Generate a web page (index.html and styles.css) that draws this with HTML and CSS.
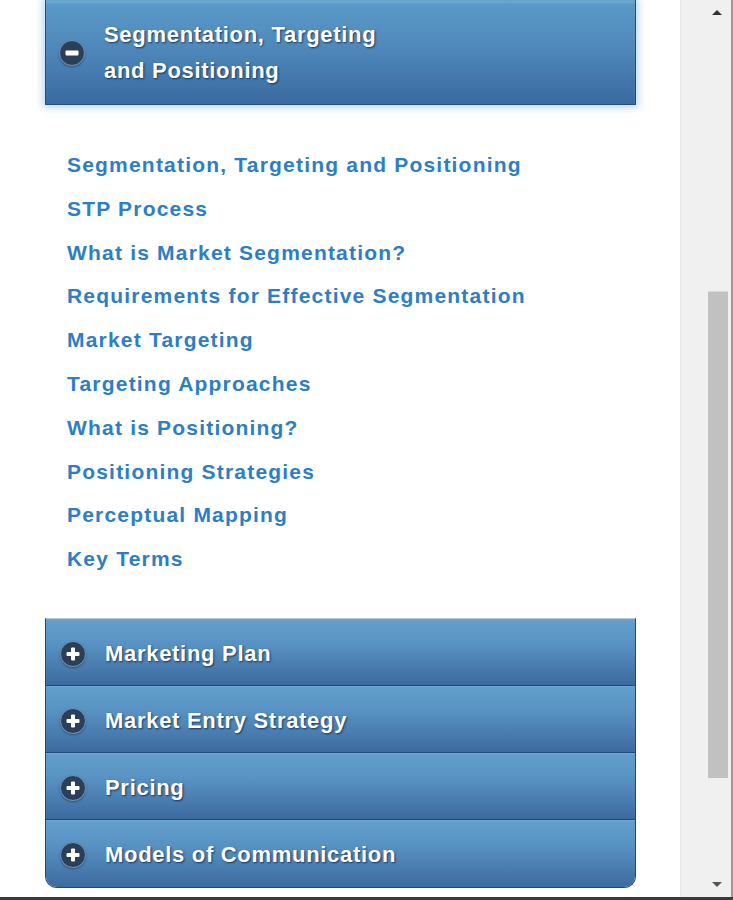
FILE: index.html
```html
<!DOCTYPE html>
<html>
<head>
<meta charset="utf-8">
<link rel="stylesheet" href="styles.css">
</head>
<body>
<div class="window">
  <main class="content">
    <div class="acc-head open">
      <span class="toggle">
        <svg width="26" height="26" viewBox="0 0 26 26"><circle cx="13" cy="13" r="12.5" fill="#2c3f58" stroke="#6f93b8" stroke-width="1"/><rect x="6.5" y="10.5" width="13" height="5" rx="1" fill="#fff"/></svg>
      </span>
      <span class="head-title">Segmentation, Targeting<br>and Positioning</span>
    </div>
    <ul class="links">
      <li><a href="#">Segmentation, Targeting and Positioning</a></li>
      <li><a href="#">STP Process</a></li>
      <li><a href="#">What is Market Segmentation?</a></li>
      <li><a href="#">Requirements for Effective Segmentation</a></li>
      <li><a href="#">Market Targeting</a></li>
      <li><a href="#">Targeting Approaches</a></li>
      <li><a href="#">What is Positioning?</a></li>
      <li><a href="#">Positioning Strategies</a></li>
      <li><a href="#">Perceptual Mapping</a></li>
      <li><a href="#">Key Terms</a></li>
    </ul>
    <div class="closed-group">
      <div class="row">
        <span class="toggle"><svg width="26" height="26" viewBox="0 0 26 26"><circle cx="13" cy="13" r="12.5" fill="#2c3f58" stroke="#6f93b8" stroke-width="1"/><rect x="6.5" y="11" width="13" height="4" rx="1" fill="#fff"/><rect x="11" y="6.5" width="4" height="13" rx="1" fill="#fff"/></svg></span>
        <span class="row-title">Marketing Plan</span>
      </div>
      <div class="row">
        <span class="toggle"><svg width="26" height="26" viewBox="0 0 26 26"><circle cx="13" cy="13" r="12.5" fill="#2c3f58" stroke="#6f93b8" stroke-width="1"/><rect x="6.5" y="11" width="13" height="4" rx="1" fill="#fff"/><rect x="11" y="6.5" width="4" height="13" rx="1" fill="#fff"/></svg></span>
        <span class="row-title">Market Entry Strategy</span>
      </div>
      <div class="row">
        <span class="toggle"><svg width="26" height="26" viewBox="0 0 26 26"><circle cx="13" cy="13" r="12.5" fill="#2c3f58" stroke="#6f93b8" stroke-width="1"/><rect x="6.5" y="11" width="13" height="4" rx="1" fill="#fff"/><rect x="11" y="6.5" width="4" height="13" rx="1" fill="#fff"/></svg></span>
        <span class="row-title">Pricing</span>
      </div>
      <div class="row last">
        <span class="toggle"><svg width="26" height="26" viewBox="0 0 26 26"><circle cx="13" cy="13" r="12.5" fill="#2c3f58" stroke="#6f93b8" stroke-width="1"/><rect x="6.5" y="11" width="13" height="4" rx="1" fill="#fff"/><rect x="11" y="6.5" width="4" height="13" rx="1" fill="#fff"/></svg></span>
        <span class="row-title">Models of Communication</span>
      </div>
    </div>
  </main>
  <aside class="scrollbar">
    <div class="arrow up"></div>
    <div class="thumb"></div>
    <div class="arrow down"></div>
  </aside>
</div>
</body>
</html>
```
FILE: styles.css
```css
html, body {
  margin: 0;
  padding: 0;
  background: #fff;
}
.window {
  display: flex;
  width: 733px;
  height: 897px;
  border-bottom: 3px solid #3a3a3a;
  overflow: hidden;
  font-family: "Liberation Sans", Arial, sans-serif;
}
.content {
  width: 592px;
  padding-left: 45px;
  padding-right: 44px;
}
.acc-head {
  height: 105px;
  box-sizing: border-box;
  padding-top: 2px;
  display: flex;
  align-items: center;
  background: linear-gradient(#6aa5d0 0, #6aa5d0 3px, #5a99c8 4px, #4f89bb 45%, #3a6aa0 100%);
  border-left: 1px solid #24507f;
  border-right: 1px solid #24507f;
  border-bottom: 1px solid #24507f;
  box-shadow: 0 0 8px 2px rgba(120, 175, 225, 0.55);
}
.toggle {
  display: flex;
  width: 26px;
  height: 26px;
  margin-left: 14px;
  margin-right: 19px;
  border-radius: 50%;
  box-shadow: 0 1px 2px rgba(0,0,0,0.35);
}
.acc-head .toggle {
  margin-left: 13px;
}
.head-title {
  color: #fff;
  font-weight: bold;
  font-size: 22px;
  line-height: 36px;
  letter-spacing: 0.7px;
  text-shadow: 1px 1px 2px rgba(10, 30, 60, 0.75);
}
.links {
  list-style: none;
  margin: 38px 0 37px 0;
  padding: 0 0 0 22px;
}
.links li {
  height: 43.8px;
  line-height: 43.8px;
}
.links a {
  color: #2d7ec3;
  text-decoration: none;
  font-weight: bold;
  font-size: 21px;
  letter-spacing: 1.2px;
}
.closed-group {
  border-top: 1px solid #b8c4d0;
  border-radius: 0 0 12px 12px;
  overflow: hidden;
  border-left: 1px solid #1f4a78;
  border-right: 1px solid #1f4a78;
  border-bottom: 1px solid #1f4a78;
}
.row {
  height: 67px;
  box-sizing: border-box;
  padding-top: 3px;
  display: flex;
  align-items: center;
  background: linear-gradient(#639fcd 0, #5893c3 35%, #4a7db0 70%, #3c6a9f 100%);
  border-top: 1px solid #6fa8d4;
  border-bottom: 1px solid #1e4a7a;
}
.row.last {
  border-bottom: none;
}
.row-title {
  color: #fff;
  font-weight: bold;
  font-size: 22px;
  letter-spacing: 0.7px;
  text-shadow: 1px 1px 2px rgba(10, 30, 60, 0.75);
}
.row .toggle {
  margin-left: 14px;
  margin-right: 19px;
}
.scrollbar {
  width: 50px;
  background: #f0f0f0;
  border-left: 1px solid #e6e6e6;
  border-right: 2px solid #9a9a9a;
  display: flex;
  flex-direction: column;
  align-items: flex-end;
}
.arrow {
  width: 0;
  height: 0;
  border-left: 5px solid transparent;
  border-right: 5px solid transparent;
  margin-right: 9px;
}
.arrow.up {
  border-bottom: 5px solid #333;
  margin-top: 10px;
}
.arrow.down {
  border-top: 5px solid #555;
  margin-top: 104px;
}
.thumb {
  width: 20px;
  height: 486px;
  margin-top: 276px;
  margin-right: 3px;
  background: #c1c1c1;
  border-top: 1px solid #dcdcdc;
}
```
